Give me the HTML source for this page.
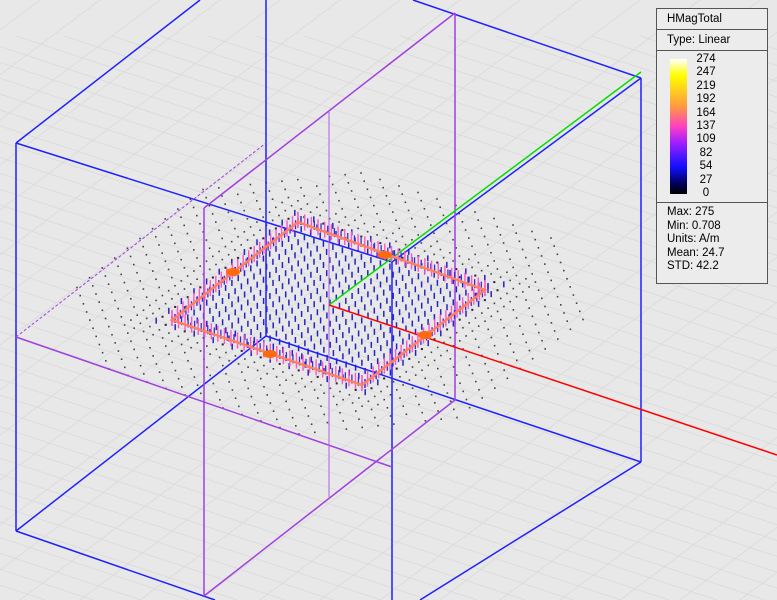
<!DOCTYPE html>
<html><head><style>
html,body{margin:0;padding:0;}
body{width:777px;height:600px;overflow:hidden;background:#e8e8e8;font-family:"Liberation Sans",sans-serif;position:relative}
*{box-sizing:border-box}
#leg{position:absolute;left:656px;top:8px;width:112px;height:276px;border:1px solid #555;background:#ececec;font-size:11.5px;color:#000;overflow:hidden}
#leg .r{border-bottom:1px solid #555;height:21px;line-height:20px;padding-left:10px}
#bar{position:absolute;left:13px;top:50px;width:17px;height:135px;background:linear-gradient(#ffffff 0%,#ffff00 12%,#ff9a40 35%,#ff40c0 50%,#a020ff 62%,#1010ff 80%,#000050 93%,#000 100%)}
#nums{position:absolute;left:32px;top:44px;width:34px;text-align:center;line-height:13.4px}
#st{position:absolute;left:0;top:193px;width:110px;border-top:1px solid #555;padding:3px 0 0 10px;line-height:13.6px}
</style></head><body>
<svg id="s" width="777" height="600" style="position:absolute;left:0;top:0;overflow:hidden">
<g id="grid" stroke="#dcdcdc" stroke-width="1"></g>
<g id="dots"></g>
<g fill="none" stroke-width="1.5">
<line x1="16" y1="143" x2="16" y2="531" stroke="#2020ff"/>
<line x1="16" y1="531" x2="215" y2="600" stroke="#2020ff"/>
<line x1="16" y1="531" x2="266" y2="336" stroke="#2020ff"/>
<line x1="266" y1="336" x2="641" y2="462" stroke="#2020ff"/>
<line x1="266" y1="0" x2="266" y2="336" stroke="#2020ff"/>
<line x1="392" y1="262" x2="392" y2="600" stroke="#2020ff"/>
<line x1="641" y1="78" x2="641" y2="462" stroke="#2020ff"/>
<line x1="641" y1="462" x2="420" y2="600" stroke="#2020ff"/>
<line x1="16" y1="143" x2="392" y2="262" stroke="#2020ff"/>
<line x1="392" y1="262" x2="641" y2="78" stroke="#2020ff"/>
<line x1="16" y1="143" x2="200" y2="0" stroke="#2020ff"/>
<line x1="413" y1="0" x2="641" y2="78" stroke="#2020ff"/>
<line x1="204" y1="208" x2="204" y2="596" stroke="#a040e0"/>
<line x1="204" y1="596" x2="455" y2="400" stroke="#a040e0"/>
<line x1="16" y1="337" x2="392" y2="467" stroke="#a040e0"/>
<line x1="16" y1="337" x2="266" y2="143" stroke="#a040e0" stroke-dasharray="3 2" stroke-width="1"/>
<line x1="329" y1="112" x2="329" y2="497" stroke="#b060e0" stroke-width="1"/>
<line x1="455" y1="13" x2="455" y2="400" stroke="#a040e0"/>
<line x1="455" y1="13" x2="204" y2="208" stroke="#a040e0"/>
<line x1="329" y1="305" x2="641" y2="72" stroke="#00e000"/>
<line x1="329" y1="305" x2="777" y2="455" stroke="#ff0000"/>
</g>
<g id="loop"></g>
</svg>
<div id="leg">
<div class="r">HMagTotal</div>
<div class="r">Type: Linear</div>
<div id="bar"></div>
<div id="nums">274<br>247<br>219<br>192<br>164<br>137<br>109<br>82<br>54<br>27<br>0</div>
<div id="st">Max: 275<br>Min: 0.708<br>Units: A/m<br>Mean: 24.7<br>STD: 42.2</div>
</div>
<script>
var NS="http://www.w3.org/2000/svg";
function el(p,t,a){var e=document.createElementNS(NS,t);for(var k in a)e.setAttribute(k,a[k]);p.appendChild(e);return e;}
var g=document.getElementById('grid');
for(var i=-40;i<40;i++){var x0=i*48;el(g,'line',{x1:x0-800,y1:-800*0.33+300,x2:x0+1200,y2:1200*0.33+300});}
for(var i=-40;i<40;i++){var x0=i*60;el(g,'line',{x1:x0-800,y1:300+800*0.75,x2:x0+1200,y2:300-1200*0.75});}
var d=document.getElementById('dots'),lp=document.getElementById('loop');
var P0=[172,320],A=[126,-98],B=[190,65],N=20;
function pt(s,t){return[P0[0]+s*A[0]+t*B[0],P0[1]+s*A[1]+t*B[1]];}
for(var i=-10;i<=N+10;i++)for(var j=-10;j<=N+10;j++){
 var s=i/N,t=j/N,p=pt(s,t);
 var ds=Math.max(0,-s,s-1),dt=Math.max(0,-t,t-1),dd=Math.max(ds,dt);
 if(ds+dt>0.5)continue;
 if(dd>0.15&&((i+j)%2))continue;
 if(dd<0.08){if(dd<0.01&&s>0.03&&s<0.97&&t>0.03&&t<0.97||(i+j)%2==0)el(d,'line',{x1:p[0],y1:p[1]-4,x2:p[0],y2:p[1]+2,stroke:'#2424c0','stroke-width':1.5});
   else el(d,'rect',{x:p[0]-1,y:p[1]-1,width:2,height:2,fill:'#223'});}
 else el(d,'rect',{x:p[0]-0.8,y:p[1]-0.8,width:1.6,height:1.6,fill:'#444'});
}
var C=[[172,320],[298,222],[485,290],[362,385]];
for(var e=0;e<4;e++){var a=C[e],b=C[(e+1)%4],L=Math.hypot(b[0]-a[0],b[1]-a[1]),n=Math.round(L/7);
 for(var k=0;k<=n;k++){var x=a[0]+(b[0]-a[0])*k/n,y=a[1]+(b[1]-a[1])*k/n;
  el(lp,'line',{x1:x,y1:y-10,x2:x,y2:y+6,stroke:'#ff55c8','stroke-width':1.4});
  el(lp,'line',{x1:x+3,y1:y-6,x2:x+3,y2:y+3,stroke:'#3030d0','stroke-width':1.3});}}
el(lp,'polygon',{points:'172,320 298,222 485,290 362,385',fill:'none',stroke:'#ff8060','stroke-width':2.5});
[[233,272],[385,255],[425,335],[270,354]].forEach(function(c){el(lp,'ellipse',{cx:c[0],cy:c[1],rx:7,ry:4,fill:'#ff6a10'});});
</script>
</body></html>
